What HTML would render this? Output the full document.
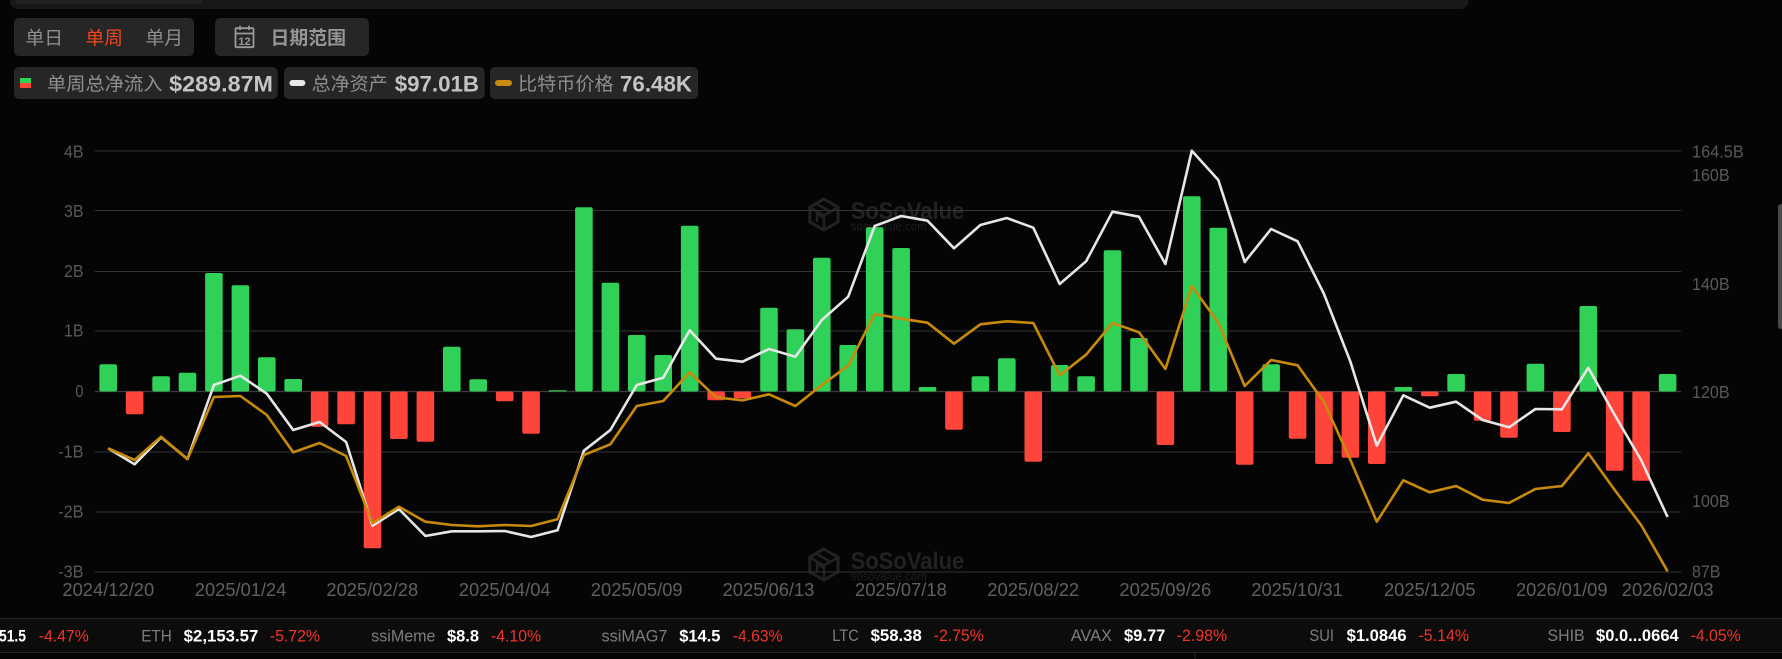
<!DOCTYPE html>
<html lang="zh"><head><meta charset="utf-8"><title>SoSoValue</title>
<style>
html,body{margin:0;padding:0;background:#050505;width:1782px;height:659px;overflow:hidden}
svg{display:block;font-family:"Liberation Sans","Noto Sans CJK SC",sans-serif}
</style></head><body>
<svg width="1782" height="659" viewBox="0 0 1782 659" xmlns="http://www.w3.org/2000/svg">
<rect width="1782" height="659" fill="#050505"/>
<!-- top bar -->
<path d="M10 0H1468.5V1a8 8 0 0 1-8 8H18a8 8 0 0 1-8-8Z" fill="#181818"/>
<path d="M16 0H202V1a3 3 0 0 1-3 3H19a3 3 0 0 1-3-3Z" fill="#222"/>
<!-- granularity -->
<rect x="14" y="18" width="180" height="38" rx="5" fill="#262626"/>
<g font-size="18.5">
<text x="25.5" y="44.5" fill="#8f8f8f" textLength="37.5" lengthAdjust="spacingAndGlyphs">单日</text>
<text x="85.5" y="44.5" fill="#f0481e" textLength="37.5" lengthAdjust="spacingAndGlyphs">单周</text>
<text x="145.5" y="44.5" fill="#8f8f8f" textLength="37.5" lengthAdjust="spacingAndGlyphs">单月</text>
</g>
<rect x="215" y="18" width="154" height="38" rx="5" fill="#262626"/>
<g fill="none" stroke="#9a9a9a" stroke-width="1.8">
<rect x="235.5" y="28.2" width="18" height="19" rx="1"/>
<path d="M235.5 33.5H253.5M240 25.8V30M249 25.8V30"/>
</g>
<text x="244.5" y="44.8" fill="#9a9a9a" font-size="11" font-weight="700" text-anchor="middle">12</text>
<text x="270.5" y="44.5" fill="#969696" font-size="18.5" font-weight="700" textLength="75.5" lengthAdjust="spacingAndGlyphs">日期范围</text>
<!-- legend chips -->
<rect x="14" y="67" width="263.7" height="32" rx="5" fill="#262626"/>
<rect x="284" y="67" width="200.7" height="32" rx="5" fill="#262626"/>
<rect x="490" y="67" width="208" height="32" rx="5" fill="#262626"/>
<rect x="20" y="78" width="11" height="5" fill="#30d158"/><rect x="20" y="83" width="11" height="5" fill="#ff453a"/>
<rect x="289.4" y="80" width="16" height="6" rx="3" fill="#e8e8e8"/>
<rect x="495" y="80" width="17" height="6" rx="3" fill="#c88a0a"/>
<g font-size="18.5" fill="#8e8e8e">
<text x="47" y="90.5" textLength="115.5" lengthAdjust="spacingAndGlyphs">单周总净流入</text>
<text x="311.7" y="90.5" textLength="76" lengthAdjust="spacingAndGlyphs">总净资产</text>
<text x="518" y="90.5" textLength="95.7" lengthAdjust="spacingAndGlyphs">比特币价格</text>
</g>
<g font-size="22.5" font-weight="700" fill="#c4c4c4">
<text x="169.2" y="91.5" textLength="103.8" lengthAdjust="spacingAndGlyphs">$289.87M</text>
<text x="394.7" y="91.5" textLength="84.3" lengthAdjust="spacingAndGlyphs">$97.01B</text>
<text x="620" y="91.5" textLength="72" lengthAdjust="spacingAndGlyphs">76.48K</text>
</g>
<!-- watermark -->
<g>
<path d="M823.8 199 L838 207.2 V222 L823.8 230 L809.8 222 V207.2 Z" fill="none" stroke="#222" stroke-width="3"/>
<path d="M810 207.5 L824 215.5 L838 207.5 M824 215.5 V230 M816 203.5 L830 211.5 M817 222 V214 L824 218" fill="none" stroke="#222" stroke-width="2.5"/>
<text x="850.7" y="219" font-size="24" font-weight="700" fill="#222" textLength="113.6" lengthAdjust="spacingAndGlyphs">SoSoValue</text>
<text x="850.7" y="230.5" font-size="13" fill="#1e1e1e" textLength="76" lengthAdjust="spacingAndGlyphs">sosovalue.com</text>
</g>
<g transform="translate(0,350)">
<path d="M823.8 199 L838 207.2 V222 L823.8 230 L809.8 222 V207.2 Z" fill="none" stroke="#222" stroke-width="3"/>
<path d="M810 207.5 L824 215.5 L838 207.5 M824 215.5 V230 M816 203.5 L830 211.5 M817 222 V214 L824 218" fill="none" stroke="#222" stroke-width="2.5"/>
<text x="850.7" y="219" font-size="24" font-weight="700" fill="#222" textLength="113.6" lengthAdjust="spacingAndGlyphs">SoSoValue</text>
<text x="850.7" y="230.5" font-size="13" fill="#1e1e1e" textLength="76" lengthAdjust="spacingAndGlyphs">sosovalue.com</text>
</g>
<!-- grid -->
<g stroke="#333" stroke-width="1">
<path d="M95 151H1681"/><path d="M95 210.5H1681"/><path d="M95 271.5H1681"/><path d="M95 331H1681"/><path d="M95 452H1681"/><path d="M95 512H1681"/><path d="M95 572H1681"/>
</g>
<path d="M95 391.5H1681" stroke="#3c3c3c" stroke-width="1.2"/>
<!-- green bars -->
<g fill="#30d158">
<rect x="99.4" y="364.3" width="17.6" height="27.2" rx="2"/>
<rect x="152.3" y="376.3" width="17.6" height="15.2" rx="2"/>
<rect x="178.7" y="372.7" width="17.6" height="18.8" rx="2"/>
<rect x="205.1" y="273" width="17.6" height="118.5" rx="2"/>
<rect x="231.6" y="285.3" width="17.6" height="106.2" rx="2"/>
<rect x="258" y="357.3" width="17.6" height="34.2" rx="2"/>
<rect x="284.4" y="379" width="17.6" height="12.5" rx="2"/>
<rect x="443" y="346.7" width="17.6" height="44.8" rx="2"/>
<rect x="469.4" y="379.3" width="17.6" height="12.2" rx="2"/>
<rect x="548.7" y="390.3" width="17.6" height="1.2"/>
<rect x="575.1" y="207.3" width="17.6" height="184.2" rx="2"/>
<rect x="601.6" y="282.7" width="17.6" height="108.8" rx="2"/>
<rect x="628" y="335" width="17.6" height="56.5" rx="2"/>
<rect x="654.4" y="355" width="17.6" height="36.5" rx="2"/>
<rect x="680.9" y="225.7" width="17.6" height="165.8" rx="2"/>
<rect x="760.2" y="307.7" width="17.6" height="83.8" rx="2"/>
<rect x="786.6" y="329.3" width="17.6" height="62.2" rx="2"/>
<rect x="813" y="257.7" width="17.6" height="133.8" rx="2"/>
<rect x="839.4" y="345" width="17.6" height="46.5" rx="2"/>
<rect x="865.9" y="227.3" width="17.6" height="164.2" rx="2"/>
<rect x="892.3" y="248" width="17.6" height="143.5" rx="2"/>
<rect x="918.7" y="387" width="17.6" height="4.5" rx="1.5"/>
<rect x="971.6" y="376.3" width="17.6" height="15.2" rx="2"/>
<rect x="998" y="358.3" width="17.6" height="33.2" rx="2"/>
<rect x="1050.9" y="365" width="17.6" height="26.5" rx="2"/>
<rect x="1077.3" y="376.3" width="17.6" height="15.2" rx="2"/>
<rect x="1103.7" y="250.3" width="17.6" height="141.2" rx="2"/>
<rect x="1130.2" y="338" width="17.6" height="53.5" rx="2"/>
<rect x="1183" y="196.3" width="17.6" height="195.2" rx="2"/>
<rect x="1209.5" y="227.7" width="17.6" height="163.8" rx="2"/>
<rect x="1262.3" y="364.3" width="17.6" height="27.2" rx="2"/>
<rect x="1394.5" y="387" width="17.6" height="4.5" rx="1.5"/>
<rect x="1447.3" y="374" width="17.6" height="17.5" rx="2"/>
<rect x="1526.6" y="363.7" width="17.6" height="27.8" rx="2"/>
<rect x="1579.5" y="306" width="17.6" height="85.5" rx="2"/>
<rect x="1658.8" y="374" width="17.6" height="17.5" rx="2"/>
</g>
<!-- red bars -->
<g fill="#ff453a">
<rect x="125.8" y="391.5" width="17.6" height="22.8" rx="2"/>
<rect x="310.8" y="391.5" width="17.6" height="35.2" rx="2"/>
<rect x="337.3" y="391.5" width="17.6" height="32.8" rx="2"/>
<rect x="363.7" y="391.5" width="17.6" height="156.8" rx="2"/>
<rect x="390.1" y="391.5" width="17.6" height="47.5" rx="2"/>
<rect x="416.6" y="391.5" width="17.6" height="50.2" rx="2"/>
<rect x="495.9" y="391.5" width="17.6" height="9.8" rx="2"/>
<rect x="522.3" y="391.5" width="17.6" height="42.2" rx="2"/>
<rect x="707.3" y="391.5" width="17.6" height="8.8" rx="2"/>
<rect x="733.7" y="391.5" width="17.6" height="6.8" rx="2"/>
<rect x="945.2" y="391.5" width="17.6" height="38.2" rx="2"/>
<rect x="1024.5" y="391.5" width="17.6" height="70.2" rx="2"/>
<rect x="1156.6" y="391.5" width="17.6" height="53.5" rx="2"/>
<rect x="1235.9" y="391.5" width="17.6" height="73.2" rx="2"/>
<rect x="1288.8" y="391.5" width="17.6" height="47.2" rx="2"/>
<rect x="1315.2" y="391.5" width="17.6" height="72.5" rx="2"/>
<rect x="1341.6" y="391.5" width="17.6" height="66.2" rx="2"/>
<rect x="1368" y="391.5" width="17.6" height="72.5" rx="2"/>
<rect x="1420.9" y="391.5" width="17.6" height="4.8" rx="2"/>
<rect x="1473.8" y="391.5" width="17.6" height="29.2" rx="2"/>
<rect x="1500.2" y="391.5" width="17.6" height="46.2" rx="2"/>
<rect x="1553.1" y="391.5" width="17.6" height="40.5" rx="2"/>
<rect x="1605.9" y="391.5" width="17.6" height="79.2" rx="2"/>
<rect x="1632.3" y="391.5" width="17.6" height="89.2" rx="2"/>
</g>
<!-- white line -->
<polyline fill="none" stroke="#e6e6e6" stroke-width="2.6" stroke-linejoin="round" points="108.2,448.3 134.6,464.3 161.1,437.3 187.5,459 213.9,385 240.4,375.7 266.8,393.7 293.2,430 319.6,422 346.1,442 372.5,525.7 398.9,509 425.4,536 451.8,531.3 478.2,531.3 504.7,531 531.1,537 557.5,530.3 583.9,450.7 610.4,430 636.8,385 663.2,377.7 689.7,330.3 716.1,358.7 742.5,361.7 769,349 795.4,356.7 821.8,320 848.2,296.7 874.7,226 901.1,216 927.5,220.7 954,248.3 980.4,225 1006.8,218 1033.3,227.7 1059.7,284 1086.1,261.3 1112.5,211.7 1139,216.7 1165.4,264 1191.8,150.7 1218.3,180 1244.7,262 1271.1,229 1297.6,241.3 1324,294 1350.4,361.7 1376.8,445.7 1403.3,395.3 1429.7,407.7 1456.1,401.7 1482.6,420 1509,427.3 1535.4,409 1561.9,409.3 1588.3,367.7 1614.7,415 1641.1,460 1667.6,517"/>
<!-- gold line -->
<polyline fill="none" stroke="#c88a0a" stroke-width="2.6" stroke-linejoin="round" points="108.2,448.3 134.6,460 161.1,436.7 187.5,459.3 213.9,397 240.4,396 266.8,415 293.2,452.3 319.6,443 346.1,456 372.5,523.3 398.9,506.7 425.4,521.7 451.8,525 478.2,526.3 504.7,525 531.1,526 557.5,519.3 583.9,455 610.4,444.3 636.8,406 663.2,401 689.7,372.3 716.1,397.3 742.5,400.3 769,394.3 795.4,406 821.8,385 848.2,365.7 874.7,314 901.1,318.7 927.5,322.7 954,343.7 980.4,324.3 1006.8,321.3 1033.3,323 1059.7,375.3 1086.1,354.7 1112.5,323 1139,332.3 1165.4,369 1191.8,286 1218.3,322.7 1244.7,386 1271.1,360 1297.6,365.3 1324,402 1350.4,460 1376.8,521.7 1403.3,480.3 1429.7,492.3 1456.1,486 1482.6,499.7 1509,503 1535.4,489 1561.9,486 1588.3,453.3 1614.7,490 1641.1,525 1667.6,571.3"/>
<!-- y axis left -->
<g font-size="17.5" fill="#585858">
<text x="64" y="157.7" textLength="19.5" lengthAdjust="spacingAndGlyphs">4B</text>
<text x="64" y="217" textLength="19.5" lengthAdjust="spacingAndGlyphs">3B</text>
<text x="64" y="277.2" textLength="19.5" lengthAdjust="spacingAndGlyphs">2B</text>
<text x="64" y="336.7" textLength="19.5" lengthAdjust="spacingAndGlyphs">1B</text>
<text x="75.4" y="397.2" textLength="8.1" lengthAdjust="spacingAndGlyphs">0</text>
<text x="58.2" y="457.7" textLength="25.3" lengthAdjust="spacingAndGlyphs">-1B</text>
<text x="58.2" y="517.7" textLength="25.3" lengthAdjust="spacingAndGlyphs">-2B</text>
<text x="58.2" y="577.7" textLength="25.3" lengthAdjust="spacingAndGlyphs">-3B</text>
</g>
<!-- y axis right -->
<g font-size="17.5" fill="#585858">
<text x="1692" y="157.7" textLength="51.8" lengthAdjust="spacingAndGlyphs">164.5B</text>
<text x="1692" y="181.2" textLength="37.6" lengthAdjust="spacingAndGlyphs">160B</text>
<text x="1692" y="290" textLength="37.6" lengthAdjust="spacingAndGlyphs">140B</text>
<text x="1692" y="398.2" textLength="37.6" lengthAdjust="spacingAndGlyphs">120B</text>
<text x="1692" y="507.2" textLength="37.6" lengthAdjust="spacingAndGlyphs">100B</text>
<text x="1692" y="577.7" textLength="28.4" lengthAdjust="spacingAndGlyphs">87B</text>
</g>
<!-- x axis -->
<g font-size="18" fill="#606060">
<text x="62.4" y="596" textLength="91.8" lengthAdjust="spacingAndGlyphs">2024/12/20</text>
<text x="194.8" y="596" textLength="91.6" lengthAdjust="spacingAndGlyphs">2025/01/24</text>
<text x="326.4" y="596" textLength="91.8" lengthAdjust="spacingAndGlyphs">2025/02/28</text>
<text x="458.8" y="596" textLength="91.8" lengthAdjust="spacingAndGlyphs">2025/04/04</text>
<text x="590.8" y="596" textLength="91.8" lengthAdjust="spacingAndGlyphs">2025/05/09</text>
<text x="722.6" y="596" textLength="91.8" lengthAdjust="spacingAndGlyphs">2025/06/13</text>
<text x="855" y="596" textLength="91.8" lengthAdjust="spacingAndGlyphs">2025/07/18</text>
<text x="987.3" y="596" textLength="91.8" lengthAdjust="spacingAndGlyphs">2025/08/22</text>
<text x="1119.4" y="596" textLength="91.8" lengthAdjust="spacingAndGlyphs">2025/09/26</text>
<text x="1251.3" y="596" textLength="91.5" lengthAdjust="spacingAndGlyphs">2025/10/31</text>
<text x="1384" y="596" textLength="91.5" lengthAdjust="spacingAndGlyphs">2025/12/05</text>
<text x="1516" y="596" textLength="91.5" lengthAdjust="spacingAndGlyphs">2026/01/09</text>
<text x="1621.8" y="596" textLength="91.8" lengthAdjust="spacingAndGlyphs">2026/02/03</text>
</g>
<!-- ticker -->
<rect x="0" y="618" width="1782" height="34" fill="#0c0c0c"/>
<path d="M0 618.5H1782M0 652.5H1782" stroke="#242424" stroke-width="1"/>
<path d="M1195 652V659" stroke="#242424" stroke-width="1"/>
<g font-size="16.5" fill="#7d7d7d">
<text x="141.2" y="641.5" textLength="30.6" lengthAdjust="spacingAndGlyphs">ETH</text>
<text x="371.2" y="641.5" textLength="64.3" lengthAdjust="spacingAndGlyphs">ssiMeme</text>
<text x="601.5" y="641.5" textLength="65.9" lengthAdjust="spacingAndGlyphs">ssiMAG7</text>
<text x="832.3" y="641" textLength="26.4" lengthAdjust="spacingAndGlyphs">LTC</text>
<text x="1070.7" y="641" textLength="41.3" lengthAdjust="spacingAndGlyphs">AVAX</text>
<text x="1309.4" y="641" textLength="24.6" lengthAdjust="spacingAndGlyphs">SUI</text>
<text x="1547.5" y="641" textLength="37.1" lengthAdjust="spacingAndGlyphs">SHIB</text>
</g>
<g font-size="16.5" font-weight="700" fill="#fff">
<text x="-1" y="641.5" textLength="27" lengthAdjust="spacingAndGlyphs">51.5</text>
<text x="183.7" y="641.5" textLength="74.6" lengthAdjust="spacingAndGlyphs">$2,153.57</text>
<text x="447" y="641.5" textLength="32" lengthAdjust="spacingAndGlyphs">$8.8</text>
<text x="679.2" y="641.5" textLength="41.3" lengthAdjust="spacingAndGlyphs">$14.5</text>
<text x="870.6" y="641" textLength="51.2" lengthAdjust="spacingAndGlyphs">$58.38</text>
<text x="1124" y="641" textLength="41.3" lengthAdjust="spacingAndGlyphs">$9.77</text>
<text x="1346.6" y="641" textLength="60" lengthAdjust="spacingAndGlyphs">$1.0846</text>
<text x="1596" y="641" textLength="82.7" lengthAdjust="spacingAndGlyphs">$0.0...0664</text>
</g>
<g font-size="16.5" fill="#f0342a">
<text x="38.7" y="641.5" textLength="50.1" lengthAdjust="spacingAndGlyphs">-4.47%</text>
<text x="269.8" y="641.5" textLength="50.2" lengthAdjust="spacingAndGlyphs">-5.72%</text>
<text x="491" y="641.5" textLength="50" lengthAdjust="spacingAndGlyphs">-4.10%</text>
<text x="732.8" y="641.5" textLength="49.7" lengthAdjust="spacingAndGlyphs">-4.63%</text>
<text x="933.7" y="641" textLength="50.1" lengthAdjust="spacingAndGlyphs">-2.75%</text>
<text x="1176.7" y="641" textLength="50.5" lengthAdjust="spacingAndGlyphs">-2.98%</text>
<text x="1418.5" y="641" textLength="50.5" lengthAdjust="spacingAndGlyphs">-5.14%</text>
<text x="1690.6" y="641" textLength="50.1" lengthAdjust="spacingAndGlyphs">-4.05%</text>
</g>
<!-- scrollbar -->
<rect x="1778" y="204" width="6" height="125" rx="3" fill="#4a4a4a"/>
</svg>
</body></html>
